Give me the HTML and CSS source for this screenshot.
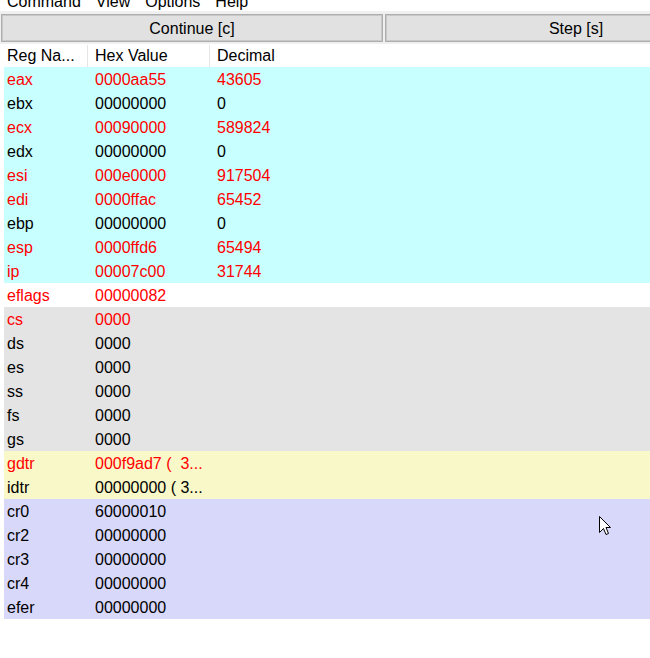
FILE: index.html
```html
<!DOCTYPE html>
<html>
<head>
<meta charset="utf-8">
<link rel="stylesheet" href="styles.css">
</head>
<body>
<div class="app">
  <div class="menubar">
    <div class="menu-line">
      <span class="menu-item first">Command</span>
      <span class="menu-item">View</span>
      <span class="menu-item">Options</span>
      <span class="menu-item">Help</span>
    </div>
  </div>
  <div class="toolbar">
    <div class="btn">Continue [c]</div>
    <div class="btn">Step [s]</div>
  </div>
  <div class="table">
    <div class="row head">
      <div class="c1">Reg Na...</div>
      <div class="c2 sep">Hex Value</div>
      <div class="c3 sep">Decimal</div>
    </div>
    <div class="row gen red"><div class="c1">eax</div><div class="c2">0000aa55</div><div class="c3">43605</div></div>
    <div class="row gen"><div class="c1">ebx</div><div class="c2">00000000</div><div class="c3">0</div></div>
    <div class="row gen red"><div class="c1">ecx</div><div class="c2">00090000</div><div class="c3">589824</div></div>
    <div class="row gen"><div class="c1">edx</div><div class="c2">00000000</div><div class="c3">0</div></div>
    <div class="row gen red"><div class="c1">esi</div><div class="c2">000e0000</div><div class="c3">917504</div></div>
    <div class="row gen red"><div class="c1">edi</div><div class="c2">0000ffac</div><div class="c3">65452</div></div>
    <div class="row gen"><div class="c1">ebp</div><div class="c2">00000000</div><div class="c3">0</div></div>
    <div class="row gen red"><div class="c1">esp</div><div class="c2">0000ffd6</div><div class="c3">65494</div></div>
    <div class="row gen red"><div class="c1">ip</div><div class="c2">00007c00</div><div class="c3">31744</div></div>
    <div class="row flags red"><div class="c1">eflags</div><div class="c2">00000082</div><div class="c3"></div></div>
    <div class="row seg red"><div class="c1">cs</div><div class="c2">0000</div><div class="c3"></div></div>
    <div class="row seg"><div class="c1">ds</div><div class="c2">0000</div><div class="c3"></div></div>
    <div class="row seg"><div class="c1">es</div><div class="c2">0000</div><div class="c3"></div></div>
    <div class="row seg"><div class="c1">ss</div><div class="c2">0000</div><div class="c3"></div></div>
    <div class="row seg"><div class="c1">fs</div><div class="c2">0000</div><div class="c3"></div></div>
    <div class="row seg"><div class="c1">gs</div><div class="c2">0000</div><div class="c3"></div></div>
    <div class="row dtr red"><div class="c1">gdtr</div><div class="c2">000f9ad7 (&nbsp; 3...</div><div class="c3"></div></div>
    <div class="row dtr"><div class="c1">idtr</div><div class="c2">00000000 ( 3...</div><div class="c3"></div></div>
    <div class="row ctl"><div class="c1">cr0</div><div class="c2">60000010</div><div class="c3"></div></div>
    <div class="row ctl"><div class="c1">cr2</div><div class="c2">00000000</div><div class="c3"></div></div>
    <div class="row ctl"><div class="c1">cr3</div><div class="c2">00000000</div><div class="c3"></div></div>
    <div class="row ctl"><div class="c1">cr4</div><div class="c2">00000000</div><div class="c3"></div></div>
    <div class="row ctl"><div class="c1">efer</div><div class="c2">00000000</div><div class="c3"></div></div>
  </div>
  <svg class="cursor" width="13" height="20" viewBox="0 0 13 20">
    <path d="M0.5 0.5 L0.5 16.5 L4.5 12.5 L7 18.5 L9.5 17.5 L7 11.5 L11.5 11.5 Z" fill="#fff" stroke="#000" stroke-width="1" stroke-linejoin="miter"/>
  </svg>
</div>
</body>
</html>
```
FILE: styles.css
```css
html, body {
  margin: 0;
  padding: 0;
  background: #ffffff;
  overflow: hidden;
}
.app {
  position: relative;
  width: 650px;
  height: 658px;
  overflow: hidden;
  font-family: "Liberation Sans", Arial, sans-serif;
  font-size: 16px;
  color: #000;
}
.menubar {
  height: 11px;
  overflow: hidden;
}
.menu-line {
  margin-top: -7px;
  line-height: 18px;
  white-space: nowrap;
  display: flex;
}
.menu-item {
  padding: 0 7.5px;
}
.menu-item.first {
  padding-left: 7px;
}
.toolbar {
  background: #f0f0f0;
  height: 33px;
  box-sizing: border-box;
  padding: 3px 0 2px 1px;
  display: grid;
  grid-template-columns: 382px 382px;
  column-gap: 2px;
  width: 770px;
}
.btn {
  background: #e1e1e1;
  border: 1px solid #adadad;
  box-shadow: inset 0 0 0 1px #c8c8c8;
  display: flex;
  align-items: center;
  justify-content: center;
  line-height: 18px;
  padding-top: 2px;
}
.table {
  margin-left: 4px;
  width: 700px;
}
.row {
  display: grid;
  grid-template-columns: 83px 122px 1fr;
  height: 24px;
  box-sizing: border-box;
  padding-top: 4px;
  line-height: 18px;
  white-space: nowrap;
}
.row.head {
  height: 23px;
  padding-top: 1px;
  background: #fff;
  align-items: stretch;
}
.row.head > div {
  display: flex;
  align-items: center;
}
.c1 {
  padding-left: 3px;
}
.c2, .c3 {
  padding-left: 8px;
}
.head .sep {
  border-left: 1px solid #e5e5e5;
  padding-left: 7px;
}
.red {
  color: #ff0000;
}
.gen {
  background: #c8ffff;
}
.flags {
  background: #ffffff;
}
.seg {
  background: #e4e4e4;
}
.dtr {
  background: #f8f8c8;
}
.ctl {
  background: #d8d8fa;
}
.cursor {
  position: absolute;
  left: 599px;
  top: 516px;
}
```
